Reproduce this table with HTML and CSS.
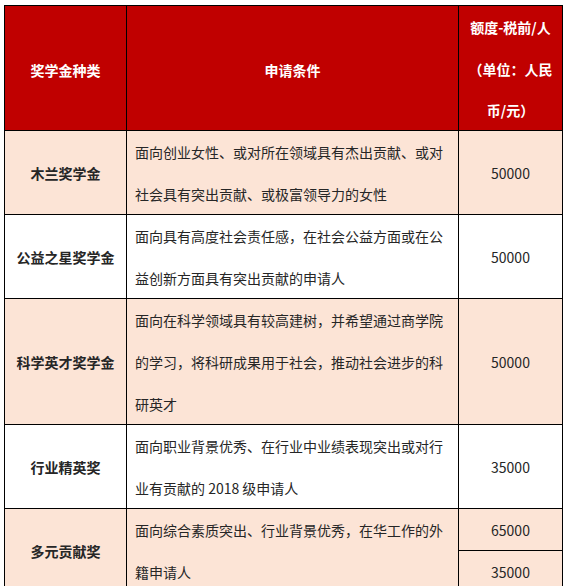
FILE: index.html
```html
<!DOCTYPE html>
<html lang="zh-CN">
<head>
<meta charset="utf-8">
<title>奖学金种类</title>
<link rel="stylesheet" href="styles.css">
</head>
<body>
<div class="sheet">
  <div class="cell head name">奖学金种类</div>
  <div class="cell head cond">申请条件</div>
  <div class="cell head amt"><span>额度-税前/人</span><span>（单位：人民</span><span>币/元）</span></div>

  <div class="cell name peach">木兰奖学金</div>
  <div class="cell cond peach">面向创业女性、或对所在领域具有杰出贡献、或对社会具有突出贡献、或极富领导力的女性</div>
  <div class="cell amt peach">50000</div>

  <div class="cell name">公益之星奖学金</div>
  <div class="cell cond">面向具有高度社会责任感，在社会公益方面或在公益创新方面具有突出贡献的申请人</div>
  <div class="cell amt">50000</div>

  <div class="cell name peach">科学英才奖学金</div>
  <div class="cell cond peach">面向在科学领域具有较高建树，并希望通过商学院的学习，将科研成果用于社会，推动社会进步的科研英才</div>
  <div class="cell amt peach">50000</div>

  <div class="cell name">行业精英奖</div>
  <div class="cell cond">面向职业背景优秀、在行业中业绩表现突出或对行业有贡献的 2018 级申请人</div>
  <div class="cell amt">35000</div>

  <div class="cell name peach span2">多元贡献奖</div>
  <div class="cell cond peach span2">面向综合素质突出、行业背景优秀，在华工作的外籍申请人</div>
  <div class="cell amt peach">65000</div>
  <div class="cell amt peach">35000</div>
</div>
</body>
</html>
```
FILE: styles.css
```css
html, body {
  margin: 0;
  padding: 0;
  background: #ffffff;
}

body {
  padding: 5px 0 0 4px;
  font-family: "Noto Sans CJK SC", "Noto Sans", sans-serif;
  font-size: 14px;
  color: #262626;
}

.sheet {
  display: grid;
  grid-template-columns: 121px 331px 103px;
  grid-template-rows: 124px 83px 83px 125px 83px 41px 41px;
  gap: 1px;
  padding: 1px;
  background: #000000;
  width: max-content;
}

.cell {
  background: #ffffff;
  line-height: 42px;
  display: flex;
  align-items: center;
  overflow: hidden;
}

.cell.peach {
  background: #fce4d6;
}

.cell.head {
  background: #c00000;
  color: #ffffff;
  font-weight: bold;
  padding-top: 3px;
  box-sizing: border-box;
}

.name {
  justify-content: center;
  font-weight: bold;
  text-align: center;
}

.cond {
  padding: 0 8px;
}

.head.cond {
  justify-content: center;
}

.amt {
  justify-content: center;
  text-align: center;
}

.head.amt {
  flex-direction: column;
  justify-content: center;
}

.head.amt span {
  display: block;
  line-height: 41.5px;
}

.span2 {
  grid-row: span 2;
}
```
